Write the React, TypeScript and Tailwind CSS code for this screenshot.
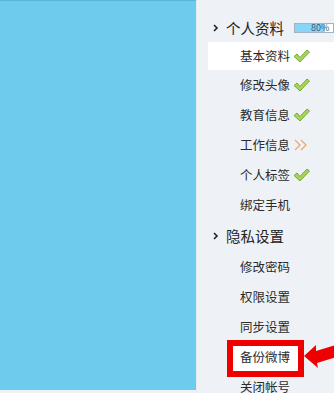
// Account settings sidebar with a highlighted "备份微博" entry.
const FONT = { fontFamily: '"Noto Sans CJK SC", "Noto Sans", sans-serif' };

type Mark = 'check' | 'more' | null;

const PROFILE: { label: string; mark: Mark; active?: boolean }[] = [
  { label: '基本资料', mark: 'check', active: true },
  { label: '修改头像', mark: 'check' },
  { label: '教育信息', mark: 'check' },
  { label: '工作信息', mark: 'more' },
  { label: '个人标签', mark: 'check' },
  { label: '绑定手机', mark: null },
];

const PRIVACY = ['修改密码', '权限设置', '同步设置', '备份微博', '关闭帐号'];
const BOXED = '备份微博';

function Check() {
  return (
    <svg width="17" height="14" viewBox="0 0 17 14" className="ml-[3px]">
      <path
        d="M1 7.5 L4 5 L7 8.5 L14 1 L16.5 3 L7 13 Z"
        fill="#a8d35c"
        stroke="#74ad2c"
        strokeWidth="1"
        strokeLinejoin="round"
      />
    </svg>
  );
}

function More() {
  return (
    <svg width="16" height="14" viewBox="0 0 16 14" className="ml-[3px]">
      <path d="M2 2 L7 7 L2 12" fill="none" stroke="#f0a866" strokeWidth="1.3" />
      <path d="M8 2 L13 7 L8 12" fill="none" stroke="#f0a866" strokeWidth="1.3" />
    </svg>
  );
}

function Chevron() {
  return (
    <svg width="6" height="8" viewBox="0 0 6 8" className="mr-[7px]">
      <path d="M1 1 L4 4 L1 7" fill="none" stroke="#222" strokeWidth="1.6" />
    </svg>
  );
}

function Item({ label, mark, active, boxed }: { label: string; mark: Mark; active?: boolean; boxed?: boolean }) {
  return (
    <div
      className={`relative flex items-center pl-[32px] text-[12.5px] text-[#2b2b2b] ${
        active ? 'h-[28px] bg-white' : 'h-[30px]'
      }`}
    >
      {/* red annotation frame drawn round the entry */}
      {boxed ? (
        <div className="absolute left-[19px] top-[-2px] h-[37px] w-[77px] border-[6px] border-[#ee0000] bg-white" />
      ) : null}
      <span className="relative">{label}</span>
      {mark === 'check' ? <Check /> : null}
      {mark === 'more' ? <More /> : null}
    </div>
  );
}

function Arrow() {
  return (
    <svg width="32" height="26" viewBox="0 0 32 26" className="absolute left-[304px] top-[343px]">
      <path d="M0 13 L12 2 L12 8 L32 2 L32 14 L13 20 L14 25 Z" fill="#ee0000" />
    </svg>
  );
}

export default function App() {
  return (
    <div className="relative flex h-[393px] w-[334px] overflow-hidden bg-[#eef2f6]" style={FONT}>
      <div className="h-[390px] w-[196px] border-t border-[#58b5da] bg-[#6dcbee]" />
      <div className="flex-1 border-l border-[#e4ebf1] pl-[11px] pt-[14px]">
        <div className="flex h-[28px] items-center pl-[5px] text-[14.5px] text-[#222]">
          <Chevron />
          个人资料
          <div className="relative ml-[10px] h-[10px] flex-1 border border-[#9fb3c4] bg-white">
            <div className="h-full w-[80%] bg-[#8ad5f6]" />
            <span className="absolute left-[16px] top-[-3px] text-[9px] leading-[14px] text-[#3a5a78]">80%</span>
          </div>
        </div>
        {PROFILE.map((p) => (
          <Item key={p.label} {...p} />
        ))}
        <div className="flex h-[32px] items-center pl-[5px] text-[14.5px] text-[#222]">
          <Chevron />
          隐私设置
        </div>
        {PRIVACY.map((label) => (
          <Item key={label} label={label} mark={null} boxed={label === BOXED} />
        ))}
      </div>
      <Arrow />
    </div>
  );
}
